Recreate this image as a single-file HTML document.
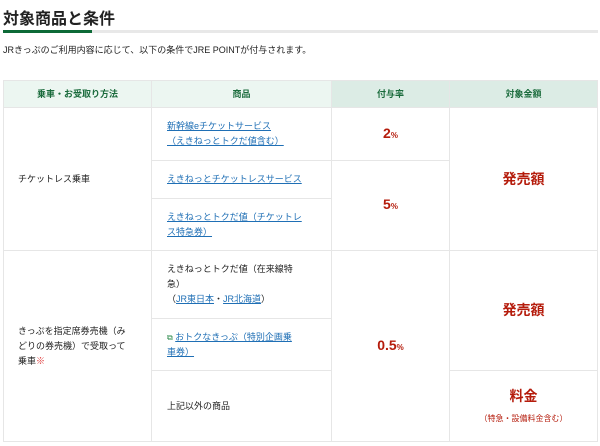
<!DOCTYPE html>
<html><head><meta charset="utf-8"><style>
*{margin:0;padding:0;box-sizing:border-box}
body{width:600px;height:446px;background:#fff;font-family:"Liberation Sans","Noto Sans CJK JP",sans-serif;color:#222;position:relative;overflow:hidden}
.a{position:absolute}
.c{position:absolute;border:1px solid #e6e6e6;display:flex;align-items:center;font-size:9px;line-height:15px}
.h{justify-content:center;background:#ecf6f1;color:#1a6b3c;font-weight:bold;font-size:9px}
a{color:#1f6fb5;text-decoration:underline}
.r{color:#b51c0c;font-weight:bold}
.ctr{justify-content:center;flex-direction:column;text-align:center}
</style></head><body>
<div class="a" style="left:3px;top:5px;font-size:16px;font-weight:bold;color:#222">対象商品と条件</div>
<div class="a" style="left:3px;top:30px;width:595px;height:3px;background:#e8e8e8"></div>
<div class="a" style="left:3px;top:30px;width:89px;height:3px;background:#0d6a37"></div>
<div class="a" style="left:3px;top:43px;font-size:9px">JRきっぷのご利用内容に応じて、以下の条件でJRE POINTが付与されます。</div>

<div class="c h" style="left:3px;top:80px;width:149px;height:28px">乗車・お受取り方法</div>
<div class="c h" style="left:151px;top:80px;width:181px;height:28px">商品</div>
<div class="c h" style="left:331px;top:80px;width:119px;height:28px;background:#dcece5">付与率</div>
<div class="c h" style="left:449px;top:80px;width:149px;height:28px;background:#dcece5">対象金額</div>

<div class="c" style="left:3px;top:107px;width:149px;height:144px;padding-left:14px">チケットレス乗車</div>
<div class="c" style="left:151px;top:107px;width:181px;height:54px;padding-left:15px"><div><a>新幹線eチケットサービス<br>（えきねっとトクだ値含む）</a></div></div>
<div class="c" style="left:151px;top:160px;width:181px;height:39px;padding-left:15px"><a>えきねっとチケットレスサービス</a></div>
<div class="c" style="left:151px;top:198px;width:181px;height:53px;padding-left:15px"><div><a>えきねっとトクだ値（チケットレ<br>ス特急券）</a></div></div>
<div class="c ctr" style="left:331px;top:107px;width:119px;height:54px"><span class="r" style="font-size:14px">2<span style="font-size:8px">%</span></span></div>
<div class="c ctr" style="left:331px;top:160px;width:119px;height:91px"><span class="r" style="font-size:14px">5<span style="font-size:8px">%</span></span></div>
<div class="c ctr" style="left:449px;top:107px;width:149px;height:144px"><span class="r" style="font-size:14px">発売額</span></div>

<div class="c" style="left:3px;top:250px;width:149px;height:192px;padding-left:14px"><div>きっぷを指定席券売機（み<br>どりの券売機）で受取って<br>乗車<span style="color:#d33">※</span></div></div>
<div class="c" style="left:151px;top:250px;width:181px;height:69px;padding-left:15px"><div>えきねっとトクだ値（在来線特<br>急）<br>（<a>JR東日本</a>・<a>JR北海道</a>）</div></div>
<div class="c" style="left:151px;top:318px;width:181px;height:53px;padding-left:15px"><div><span style="color:#2a8a4a;font-size:8px">⧉</span> <a>おトクなきっぷ（特別企画乗<br>車券）</a></div></div>
<div class="c" style="left:151px;top:370px;width:181px;height:72px;padding-left:15px">上記以外の商品</div>
<div class="c ctr" style="left:331px;top:250px;width:119px;height:192px"><span class="r" style="font-size:14px">0.5<span style="font-size:8px">%</span></span></div>
<div class="c ctr" style="left:449px;top:250px;width:149px;height:121px"><span class="r" style="font-size:14px">発売額</span></div>
<div class="c ctr" style="left:449px;top:370px;width:149px;height:72px"><span class="r" style="font-size:14px;line-height:20px">料金</span><span style="color:#b51c0c;font-size:8px;margin-top:5px">（特急・設備料金含む）</span></div>
</body></html>
